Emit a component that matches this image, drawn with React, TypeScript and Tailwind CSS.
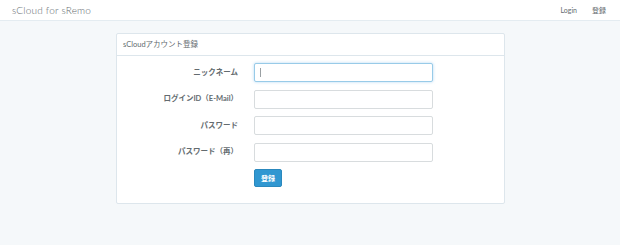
import React from "react";

const font = { fontFamily: '"Lato", "Noto Sans CJK JP", sans-serif' };

function Row({ label, focused }: { label: string; focused?: boolean }) {
  return (
    <div className="flex items-center">
      <div className="w-[121px] text-right text-[7.5px] font-bold text-[#636b6f] pr-0">{label}</div>
      <div className="ml-[16px]">
        <div
          className={
            "w-[179px] h-[19px] rounded-[2px] bg-white border flex items-center px-[5px] " +
            (focused ? "border-[#98cbe8] shadow-[0_0_3px_rgba(102,175,233,0.5)]" : "border-[#d8dcde]")
          }
        >
          {focused && <div className="w-px h-[9px] bg-[#9aa0a3]" />}
        </div>
      </div>
    </div>
  );
}

export default function App() {
  return (
    <div className="w-[620px] h-[245px] bg-[#f5f8fa] overflow-hidden" style={font}>
      <div className="h-[21px] bg-white border-b border-[#e4ecf1] flex items-center justify-between pl-[12px] pr-[14px]">
        <div className="text-[10px] font-light text-[#636b6f] tracking-[0.2px]">sCloud for sRemo</div>
        <div className="flex items-center gap-[15px] text-[7px] text-[#636b6f]">
          <span>Login</span>
          <span>登録</span>
        </div>
      </div>
      <div className="pl-[116px] pt-[12px]">
        <div className="w-[389px] bg-white border border-[#dde6ec] rounded-[2px]">
          <div className="h-[22px] border-b border-[#dde6ec] flex items-center pl-[6px] text-[7.5px] text-[#636b6f]">
            sCloudアカウント登録
          </div>
          <div className="pt-[7px] pb-[16px] flex flex-col gap-[7.5px]">
            <Row label="ニックネーム" focused />
            <Row label="ログインID（E-Mail）" />
            <Row label="パスワード" />
            <Row label="パスワード（再）" />
            <div className="flex">
              <div className="ml-[137px] w-[28px] h-[18px] rounded-[2px] bg-[#3097d1] border border-[#2a88bd] flex items-center justify-center text-white text-[7px] font-bold">
                登録
              </div>
            </div>
          </div>
        </div>
      </div>
    </div>
  );
}
